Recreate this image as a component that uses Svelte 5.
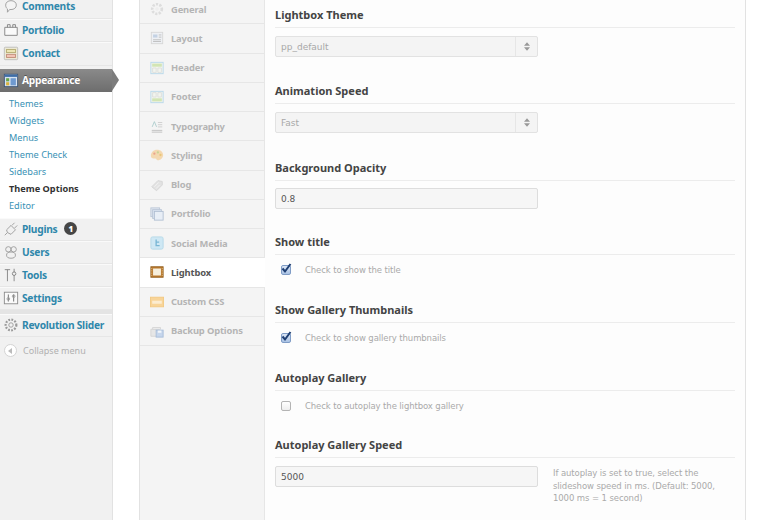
<script>
  const before = [
    { label: "Comments", icon: "comments" },
    { label: "Portfolio", icon: "portfolio" },
    { label: "Contact", icon: "contact" }
  ];
  const submenu = ["Themes", "Widgets", "Menus", "Theme Check", "Sidebars", "Theme Options", "Editor"];
  const after = [
    { label: "Plugins", icon: "plugins", badge: 1 },
    { label: "Users", icon: "users" },
    { label: "Tools", icon: "tools" },
    { label: "Settings", icon: "settings" }
  ];
  const tabs = ["General", "Layout", "Header", "Footer", "Typography", "Styling", "Blog", "Portfolio", "Social Media", "Lightbox", "Custom CSS", "Backup Options"];
</script>

{#snippet menuIcon(name)}
  <svg class="micon" viewBox="0 0 18 18" fill="none" stroke="#9a9a9a" stroke-width="1">
    {#if name === "comments"}
      <path d="M3 8c0-3 2.600-5 6-5s6 2 6 5-2.600 5-6 5c-.6 0-1 0-1.500-.1L5 16v-3.700C3.800 11.400 3 9.800 3 8z" fill="#f4f4f4" />
    {:else if name === "portfolio"}
      <path d="M2 6h14v9H2z" fill="#fafafa" stroke="#808080" /><path d="M5 6V3h3v3M11 6V3h3v3" stroke="#808080" />
    {:else if name === "contact"}
      <rect x="1.500" y="2.500" width="15" height="14" rx="1" fill="#ece9d4" stroke="#bbb" /><rect x="4" y="5" width="10" height="3.500" fill="#ece6b4" stroke="#b5ab72" /><rect x="4" y="10.500" width="10" height="3.500" fill="#f2c4b6" stroke="#c08c76" />
    {:else if name === "appearance"}
      <rect x="1.500" y="2.500" width="15" height="14" fill="#d7e3f0" stroke="#3b5578" /><rect x="2" y="3" width="14" height="2.500" fill="#3e6ea8" stroke="none" /><rect x="3.500" y="7" width="3.500" height="3.500" fill="#67a54a" stroke="none" /><rect x="3.500" y="11.500" width="3.500" height="3.500" fill="#d9b23c" stroke="none" /><rect x="8.500" y="7" width="6" height="8" fill="#6f9ad0" stroke="none" />
    {:else if name === "plugins"}
      <path d="M2 16l3-3M5 13l-1-3 5-5 5 5-5 5zM10 5l3-3M13 8l3-3" />
    {:else if name === "users"}
      <circle cx="6" cy="6" r="3" /><circle cx="12" cy="6" r="3" /><ellipse cx="9" cy="12.500" rx="5" ry="3.500" fill="#f1f1f1" />
    {:else if name === "tools"}
      <path d="M2 3h6M5 3v13M12.500 2v4M12.500 9v7" stroke="#808080" /><circle cx="12.500" cy="7.500" r="2" stroke="#808080" />
    {:else if name === "settings"}
      <rect x="1.500" y="2.500" width="15" height="13" fill="#fafafa" stroke="#8a8a8a" /><path d="M6 5v8M12 5v8" stroke="#666" /><circle cx="6" cy="10" r="1.500" /><circle cx="12" cy="7" r="1.500" />
    {:else if name === "gear"}
      <circle cx="9" cy="9" r="2.500" /><circle cx="9" cy="9" r="6" stroke-width="2.500" stroke-dasharray="2 1.500" />
    {/if}
  </svg>
{/snippet}

{#snippet tabIcon(name)}
  <svg class="ticon" viewBox="0 0 16 16" fill="none">
    {#if name === "General"}
      <circle cx="8" cy="8" r="5.500" stroke="#ddd" stroke-width="3" stroke-dasharray="2.500 1.500" /><circle cx="8" cy="8" r="2" fill="#eee" />
    {:else if name === "Layout"}
      <rect x="1.500" y="1.500" width="13" height="13" fill="#eef0f4" stroke="#d6d6d6" /><rect x="3.500" y="4" width="5" height="3.500" fill="#c4d2e4" /><path d="M10 4.500h3M10 7h3M3.500 10h9M3.500 12h9" stroke="#bbb" />
    {:else if name === "Header"}
      <rect x="1" y="1.500" width="14" height="13" fill="#f2f5ee" stroke="#b6d6ea" /><rect x="2.500" y="3" width="11" height="3.500" fill="#d2e5b4" /><path d="M3 8h4v5H3zM9 8h4v5H9z" stroke="#ddd" />
    {:else if name === "Footer"}
      <rect x="1" y="1.500" width="14" height="13" fill="#f2f5ee" stroke="#b6d6ea" /><rect x="2.500" y="9.500" width="11" height="3.500" fill="#d2e5b4" /><path d="M3 3h4v5H3zM9 3h4v5H9z" stroke="#ddd" />
    {:else if name === "Typography"}
      <path d="M2 13h12M2 15h12" stroke="#bbb" /><path d="M2.500 9L5 3l2.500 6" stroke="#acc" /><path d="M9 4h5M9 6.500h5M9 9h5" stroke="#ccc" />
    {:else if name === "Styling"}
      <path d="M8 2c4 0 7 2.500 7 6s-3 6-6 6c-2 0-1-2-3-2-1.500 0-5 0-5-3 0-4 3-7 7-7z" fill="#f4d8b0" /><circle cx="5" cy="6.500" r="1.300" fill="#eba48c" /><circle cx="9" cy="5" r="1.300" fill="#c8d494" /><circle cx="12" cy="8" r="1.300" fill="#e9c678" />
    {:else if name === "Blog"}
      <path d="M2 10l7-7 5 1 0 4-6.500 6.500z" fill="#e2e2e2" stroke="#d4d4d4" /><path d="M5 10l5-5M7 12l4-4" stroke="#f2f2f2" />
    {:else if name === "Portfolio"}
      <rect x="1" y="1" width="10" height="10" fill="#e0e7f0" stroke="#bac6d6" /><rect x="3" y="3" width="10" height="10" fill="#d8e1ee" stroke="#bac6d6" /><rect x="5" y="5" width="10" height="10" fill="#e8eef6" stroke="#b0bed2" />
    {:else if name === "Social Media"}
      <rect x="1" y="1" width="14" height="14" rx="2" fill="#cfe8f4" stroke="#b4d8e8" /><path d="M7 4v7h4M7 7h3.500" stroke="#78b6d4" stroke-width="1.500" />
    {:else if name === "Lightbox"}
      <rect x="1" y="2" width="14" height="12" fill="#b9792f" stroke="#94601f" /><rect x="3.500" y="4" width="9" height="8" fill="#f7efdc" /><path d="M2 3.500v9M14 3.500v9" stroke="#ecc88e" stroke-dasharray="1 1" />
    {:else if name === "Custom CSS"}
      <rect x="0.500" y="2.500" width="15" height="11" fill="#f8d498" stroke="#f2c880" /><rect x="2.500" y="6.500" width="11" height="3.500" fill="#fcecd0" />
    {:else}
      <path d="M1 6h9v8H1z" fill="#e6e6e6" stroke="#d4d4d4" /><path d="M3 4h9v2H3z" fill="#f0f0f0" stroke="#d4d4d4" /><rect x="7" y="7" width="8" height="8" fill="#c6d6ec" stroke="#a6bcd8" /><rect x="9" y="7.500" width="4" height="2.500" fill="#f2f6fb" />
    {/if}
  </svg>
{/snippet}

{#snippet arrows()}
  <span class="arrows">
    <svg viewBox="0 0 7 10" width="6" height="9"><path d="M3.500 0L7 4H0zM0 6h7l-3.500 4z" fill="#999" /></svg>
  </span>
{/snippet}

{#snippet box(on)}
  <span class="box" class:on>
    {#if on}
      <svg viewBox="0 0 12 12" width="12" height="12"><path d="M2.500 5.500l2.500 3L10.500 1" fill="none" stroke="#1f3f73" stroke-width="2" /></svg>
    {/if}
  </span>
{/snippet}

<div class="page">
  <aside class="sidebar">
    {#each before as item}
      <div class="item top">{@render menuIcon(item.icon)}<span>{item.label}</span></div>
    {/each}
    <div class="current">
      {@render menuIcon("appearance")}<span>Appearance</span>
    </div>
    <ul class="submenu">
      {#each submenu as s}
        <li class:active={s === "Theme Options"}>{s}</li>
      {/each}
    </ul>
    {#each after as item}
      <div class="item">
        {@render menuIcon(item.icon)}<span>{item.label}</span>
        {#if item.badge}<b class="badge">{item.badge}</b>{/if}
      </div>
    {/each}
    <div class="sep"></div>
    <div class="item">{@render menuIcon("gear")}<span>Revolution Slider</span></div>
    <div class="collapse">
      <span class="collapse-btn"><i></i></span>
      <span>Collapse menu</span>
    </div>
  </aside>

  <div class="panel">
    <nav class="tabs">
      {#each tabs as t}
        <div class="tab" class:selected={t === "Lightbox"}>
          {@render tabIcon(t)}<span>{t}</span>
        </div>
      {/each}
    </nav>

    <main class="options">
      <section class="s-select">
        <h3>Lightbox Theme</h3>
        <div class="select">pp_default{@render arrows()}</div>
      </section>
      <section class="s-select">
        <h3>Animation Speed</h3>
        <div class="select">Fast{@render arrows()}</div>
      </section>
      <section class="s-input">
        <h3>Background Opacity</h3>
        <div class="field">0.8</div>
      </section>
      <section class="s-check">
        <h3>Show title</h3>
        <div class="check">{@render box(true)}Check to show the title</div>
      </section>
      <section class="s-check">
        <h3>Show Gallery Thumbnails</h3>
        <div class="check">{@render box(true)}Check to show gallery thumbnails</div>
      </section>
      <section class="s-check">
        <h3>Autoplay Gallery</h3>
        <div class="check">{@render box(false)}Check to autoplay the lightbox gallery</div>
      </section>
      <section class="s-last">
        <h3>Autoplay Gallery Speed</h3>
        <div class="row">
          <div class="field">5000</div>
          <p>If autoplay is set to true, select the slideshow speed in ms. (Default: 5000, 1000 ms = 1 second)</p>
        </div>
      </section>
    </main>
  </div>
</div>

<style>
  :global(body) {
    margin: 0;
    background: #fff;
  }

  .page {
    display: flex;
    width: 773px;
    height: 520px;
    overflow: hidden;
    font-family: "DejaVu Sans", Verdana, sans-serif;
  }

  .sidebar {
    width: 112px;
    flex: none;
    height: 525px;
    margin-top: -5px;
    background: #f1f1f1;
    border-right: 1px solid #e2e2e2;
    font-family: "Noto Sans", sans-serif;
  }

  .item {
    box-sizing: border-box;
    display: flex;
    align-items: center;
    height: 23px;
    padding: 0 0 1px 3px;
    border-bottom: 1px solid #e6e6e6;
    border-top: 1px solid #fafafa;
    font-size: 10.200px;
    letter-spacing: -0.25px;
    font-weight: 700;
    color: #2f87ab;
    white-space: nowrap;
  }

  .item.top {
    height: 23.500px;
  }

  .micon {
    width: 16px;
    height: 16px;
    flex: none;
    margin-right: 3px;
  }

  .badge {
    width: 13px;
    height: 13px;
    margin-left: 7px;
    border-radius: 50%;
    background: #464646;
    color: #fff;
    font-size: 8px;
    letter-spacing: 0;
    line-height: 13px;
    text-align: center;
  }

  .current {
    position: relative;
    display: flex;
    align-items: center;
    height: 23px;
    margin-top: 3px;
    padding-left: 3px;
    background: linear-gradient(#8a8a8a, #6d6d6d);
    color: #fff;
    font-size: 10.200px;
    letter-spacing: -0.25px;
    font-weight: 700;
    text-shadow: 0 -1px 0 #555;
  }

  .current::after {
    content: "";
    position: absolute;
    left: 112px;
    top: 0;
    border-left: 7px solid #7c7c7c;
    border-top: 11.500px solid transparent;
    border-bottom: 11.500px solid transparent;
  }

  .submenu {
    list-style: none;
    margin: 0;
    padding: 3px 0 4px 9px;
    background: #fff;
    font-size: 9.200px;
    color: #3a92b5;
  }

  .submenu li {
    height: 17px;
    line-height: 17px;
  }

  .submenu .active {
    color: #333;
    font-weight: 700;
  }

  .sep {
    height: 4px;
    background: #e4e4e4;
  }

  .collapse {
    display: flex;
    align-items: center;
    gap: 6px;
    height: 28px;
    padding-left: 4px;
    font-size: 9px;
    color: #b0b0b0;
  }

  .collapse-btn {
    display: flex;
    align-items: center;
    justify-content: center;
    width: 11px;
    height: 11px;
    border-radius: 50%;
    background: #fff;
    border: 1px solid #d4d4d4;
  }

  .collapse-btn i {
    border-right: 4px solid #bbb;
    border-top: 3px solid transparent;
    border-bottom: 3px solid transparent;
    margin-right: 1px;
  }

  .panel {
    display: flex;
    width: 605px;
    margin-left: 26px;
    flex: none;
    height: 520px;
    background: #fdfdfd;
    border-left: 1px solid #e2e2e2;
    border-right: 1px solid #e2e2e2;
  }

  .tabs {
    width: 124px;
    flex: none;
    margin-top: -5px;
    background: #f4f4f4;
    border-right: 1px solid #e6e6e6;
    font-family: "Noto Sans", sans-serif;
  }

  .tab {
    box-sizing: border-box;
    display: flex;
    align-items: center;
    height: 29.250px;
    padding-left: 10px;
    border-bottom: 1px solid #e6e6e6;
    font-size: 9.400px;
    letter-spacing: -0.15px;
    font-weight: 700;
    color: #b4b4b4;
    white-space: nowrap;
  }

  .tab.selected {
    width: 125px;
    background: #fff;
    color: #555;
  }

  .ticon {
    width: 14px;
    height: 14px;
    flex: none;
    margin-right: 7px;
  }

  .options {
    flex: 1;
    padding: 0 10px;
  }

  h3 {
    margin: 0;
    height: 27px;
    line-height: 29px;
    border-bottom: 1px solid #ececec;
    font-family: "Noto Sans", sans-serif;
    font-size: 11px;
    font-weight: 700;
    color: #444;
  }

  .select,
  .field {
    box-sizing: border-box;
    display: flex;
    align-items: center;
    width: 263px;
    height: 21px;
    padding-left: 5px;
    border: 1px solid #e2e2e2;
    border-radius: 2px;
    font-size: 9px;
    color: #a8a8a8;
    background: #f4f4f4;
  }

  .select {
    justify-content: space-between;
  }

  .field {
    background: #f6f6f6;
    color: #555;
    border-color: #ddd;
  }

  .arrows {
    display: flex;
    align-items: center;
    justify-content: center;
    width: 21px;
    height: 100%;
    border-left: 1px solid #e6e6e6;
  }

  .s-select {
    height: 76px;
  }

  .s-select .select {
    margin-top: 8px;
  }

  .s-input {
    height: 74px;
    margin-top: 1px;
  }

  .s-input .field {
    margin-top: 7px;
  }

  .s-check {
    height: 68px;
  }

  .s-last {
    margin-top: -1px;
  }

  .check {
    display: flex;
    align-items: center;
    height: 15px;
    margin-top: 7px;
    padding-left: 6px;
    font-size: 8.500px;
    letter-spacing: -0.1px;
    color: #aaa;
  }

  .box {
    box-sizing: border-box;
    flex: none;
    display: flex;
    align-items: center;
    justify-content: center;
    width: 10px;
    height: 10px;
    margin-right: 14px;
    border: 1px solid #b4b4b4;
    border-radius: 2px;
    background: linear-gradient(#fff, #eee);
  }

  .box.on {
    border-color: #7f9cc6;
    background: linear-gradient(#dbe6f5, #a9c2e4);
  }

  .box svg {
    flex: none;
    margin-top: -2px;
  }

  .row {
    display: flex;
    gap: 15px;
    margin-top: 8px;
  }

  .row .field {
    flex: none;
  }

  .row p {
    margin: 1px 0 0;
    width: 175px;
    font-size: 8.500px;
    letter-spacing: -0.1px;
    line-height: 12.500px;
    color: #aaa;
  }
</style>
